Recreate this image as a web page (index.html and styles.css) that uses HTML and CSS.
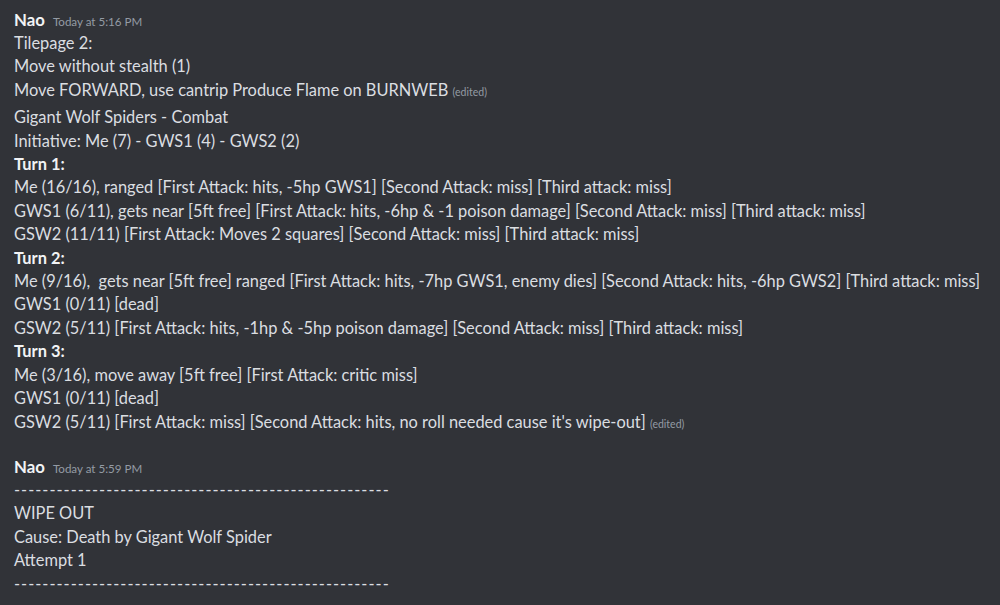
FILE: index.html
```html
<!DOCTYPE html>
<html>
<head>
<meta charset="utf-8">
<link rel="stylesheet" href="styles.css">
</head>
<body>
<main class="chat">
  <section class="group">
    <div class="msg">
      <div class="header"><span class="name">Nao</span><span class="time">Today at 5:16 PM</span></div>
      <div class="content">
        <div>Tilepage 2:</div>
        <div>Move without stealth (1)</div>
        <div>Move FORWARD, use cantrip Produce Flame on BURNWEB <span class="edited">(edited)</span></div>
      </div>
    </div>
    <div class="msg follow">
      <div class="content">
        <div>Gigant Wolf Spiders - Combat</div>
        <div>Initiative: Me (7) - GWS1 (4) - GWS2 (2)</div>
        <div><strong>Turn 1:</strong></div>
        <div>Me (16/16), ranged [First Attack: hits, -5hp GWS1] [Second Attack: miss] [Third attack: miss]</div>
        <div>GWS1 (6/11), gets near [5ft free] [First Attack: hits, -6hp &amp; -1 poison damage] [Second Attack: miss] [Third attack: miss]</div>
        <div>GSW2 (11/11) [First Attack: Moves 2 squares] [Second Attack: miss] [Third attack: miss]</div>
        <div><strong>Turn 2:</strong></div>
        <div>Me (9/16), &nbsp;gets near [5ft free] ranged [First Attack: hits, -7hp GWS1, enemy dies] [Second Attack: hits, -6hp GWS2] [Third attack: miss]</div>
        <div>GWS1 (0/11) [dead]</div>
        <div>GSW2 (5/11) [First Attack: hits, -1hp &amp; -5hp poison damage] [Second Attack: miss] [Third attack: miss]</div>
        <div><strong>Turn 3:</strong></div>
        <div>Me (3/16), move away [5ft free] [First Attack: critic miss]</div>
        <div>GWS1 (0/11) [dead]</div>
        <div>GSW2 (5/11) [First Attack: miss] [Second Attack: hits, no roll needed cause it's wipe-out] <span class="edited">(edited)</span></div>
      </div>
    </div>
  </section>
  <section class="group second">
    <div class="msg">
      <div class="header"><span class="name">Nao</span><span class="time">Today at 5:59 PM</span></div>
      <div class="content">
        <div class="dashes">-----------------------------------------------------</div>
        <div>WIPE OUT</div>
        <div>Cause: Death by Gigant Wolf Spider</div>
        <div>Attempt 1</div>
        <div class="dashes">-----------------------------------------------------</div>
      </div>
    </div>
  </section>
</main>
</body>
</html>
```

FILE: styles.css
```css
html, body {
  margin: 0;
  padding: 0;
  background: #313338;
  height: 100%;
  overflow: hidden;
}
.chat {
  padding: 8px 0 0 14px;
  font-family: "Lato", "Noto Sans", sans-serif;
  font-size: 16.4px;
  line-height: 23.4px;
  color: #dbdee1;
  white-space: nowrap;
}
.header {
  display: flex;
  align-items: baseline;
  gap: 8px;
  height: 23px;
}
.name {
  color: #f2f3f5;
  font-weight: 700;
  font-size: 16.8px;
}
.time {
  color: #949ba4;
  font-size: 11.6px;
  line-height: 1;
}
.content {
  line-height: 23.4px;
}
.follow {
  margin-top: 4px;
}
.second {
  margin-top: 22px;
}
strong {
  font-weight: 700;
  color: #f2f3f5;
}
.edited {
  color: #949ba4;
  font-size: 10.5px;
  line-height: 1;
}
.dashes {
  letter-spacing: 1px;
}
```
